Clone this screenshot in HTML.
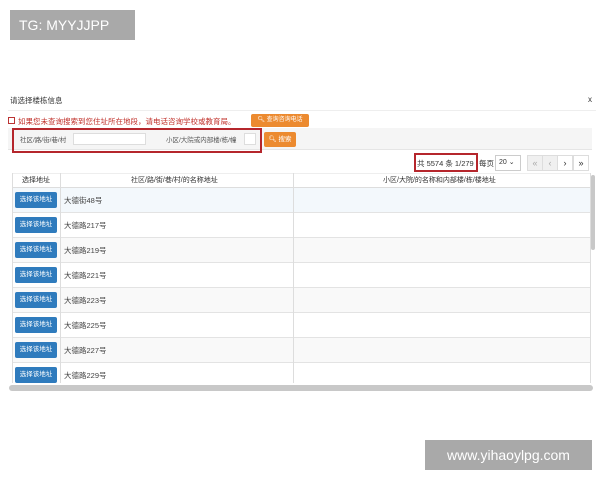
<!DOCTYPE html>
<html><head><meta charset="utf-8"><style>
*{margin:0;padding:0;box-sizing:border-box}
body{width:600px;height:480px;background:#fff;position:relative;overflow:hidden;font-family:"Liberation Sans","Noto Sans CJK SC",sans-serif;color:#333}
.a{position:absolute}
.btn{position:absolute;left:15px;width:42px;height:16px;background:#2f7bbd;border-radius:2px;color:#fff;font-size:6.5px;line-height:16px;text-align:center}
.row{position:absolute;left:12px;width:578px;height:25px;border-bottom:1px solid #e3e3e3}
.row span{position:absolute;left:52px;top:7px;font-size:7.5px;color:#444}
.pg{position:absolute;top:155px;width:16px;height:16px;border:1px solid #ddd;font-size:9px;text-align:center;line-height:14px;color:#333;background:#fff}
</style></head><body>
<div class="a" style="left:10px;top:10px;width:125px;height:30px;background:#a9a9a9;color:#fff;font-size:14px;line-height:30px;padding-left:9px">TG: MYYJJPP</div>
<div class="a" style="left:10px;top:95px;font-size:7.5px;color:#333">请选择楼栋信息</div>
<div class="a" style="left:588px;top:95px;font-size:8px">x</div>
<div class="a" style="left:8px;top:110px;width:588px;height:1px;background:#eee"></div>
<div class="a" style="left:8px;top:117px;width:7px;height:7px;border:1px solid #b33"></div>
<div class="a" style="left:18px;top:116px;font-size:7.5px;color:#c0302a">如果您未查询搜索到您住址所在地段，请电话咨询学校或教育局。</div>
<div class="a" style="left:251px;top:114px;width:58px;height:13px;background:#ec8a2f;border-radius:2px;color:#fff;font-size:6px;line-height:13px;text-align:center">🔍︎ 查询咨询电话</div>
<div class="a" style="left:8px;top:128px;width:584px;height:22px;background:#f5f5f5;border-bottom:1px solid #e5e5e5"></div>
<div class="a" style="left:12px;top:128px;width:250px;height:25px;border:2px solid #b5262c"></div>
<div class="a" style="left:20px;top:134px;font-size:6.5px;color:#555">社区/路/街/巷/村</div>
<div class="a" style="left:73px;top:133px;width:73px;height:12px;border:1px solid #ddd;background:#fff"></div>
<div class="a" style="left:166px;top:134px;font-size:6.5px;color:#555">小区/大院或内部楼/栋/幢</div>
<div class="a" style="left:244px;top:133px;width:12px;height:12px;border:1px solid #ddd;background:#fff"></div>
<div class="a" style="left:264px;top:132px;width:32px;height:15px;background:#ec8a2f;border-radius:2px;color:#fff;font-size:6.5px;line-height:15px;text-align:center">🔍︎ 搜索</div>
<div class="a" style="left:414px;top:153px;width:64px;height:19px;border:2px solid #b5262c"></div>
<div class="a" style="left:417px;top:158px;font-size:7.5px;color:#333">共 5574 条 1/279</div>
<div class="a" style="left:479px;top:158px;font-size:7.5px;color:#333">每页</div>
<div class="a" style="left:495px;top:155px;width:26px;height:16px;border:1px solid #ccc;font-size:7px;line-height:14px;padding-left:3px">20 ⌄</div>
<div class="pg" style="left:527px;color:#aaa;background:#f0f0f0">«</div>
<div class="pg" style="left:542px;color:#aaa;background:#f0f0f0">‹</div>
<div class="pg" style="left:557px">›</div>
<div class="pg" style="left:573px">»</div>
<div class="a" style="left:12px;top:173px;width:578px;height:15px;border-bottom:1px solid #ddd;border-top:1px solid #eee"></div>
<div class="a" style="left:22px;top:175px;font-size:7px">选择地址</div>
<div class="a" style="left:131px;top:175px;font-size:7px">社区/路/街/巷/村/的名称地址</div>
<div class="a" style="left:383px;top:175px;font-size:7px">小区/大院/的名称和内部楼/栋/楼地址</div>
<div class="row" style="top:188px;background:#f3f8fc"><span>大德街48号</span></div>
<div class="row" style="top:213px"><span>大德路217号</span></div>
<div class="row" style="top:238px;background:#f9f9f9"><span>大德路219号</span></div>
<div class="row" style="top:263px"><span>大德路221号</span></div>
<div class="row" style="top:288px;background:#f9f9f9"><span>大德路223号</span></div>
<div class="row" style="top:313px"><span>大德路225号</span></div>
<div class="row" style="top:338px;background:#f9f9f9"><span>大德路227号</span></div>
<div class="row" style="top:363px;height:20px;border:0"><span>大德路229号</span></div>
<div class="btn" style="top:192px">选择该地址</div>
<div class="btn" style="top:217px">选择该地址</div>
<div class="btn" style="top:242px">选择该地址</div>
<div class="btn" style="top:267px">选择该地址</div>
<div class="btn" style="top:292px">选择该地址</div>
<div class="btn" style="top:317px">选择该地址</div>
<div class="btn" style="top:342px">选择该地址</div>
<div class="btn" style="top:367px">选择该地址</div>
<div class="a" style="left:12px;top:173px;width:1px;height:210px;background:#ddd"></div>
<div class="a" style="left:60px;top:173px;width:1px;height:210px;background:#ddd"></div>
<div class="a" style="left:293px;top:173px;width:1px;height:210px;background:#ddd"></div>
<div class="a" style="left:590px;top:173px;width:1px;height:210px;background:#ddd"></div>
<div class="a" style="left:591px;top:175px;width:4px;height:75px;background:#c8c8c8;border-radius:2px"></div>
<div class="a" style="left:9px;top:385px;width:584px;height:6px;background:#c8c8c8;border-radius:3px"></div>
<div class="a" style="left:425px;top:440px;width:167px;height:30px;background:#a9a9a9;color:#fff;font-size:14px;line-height:30px;text-align:center">www.yihaoylpg.com</div>
</body></html>
